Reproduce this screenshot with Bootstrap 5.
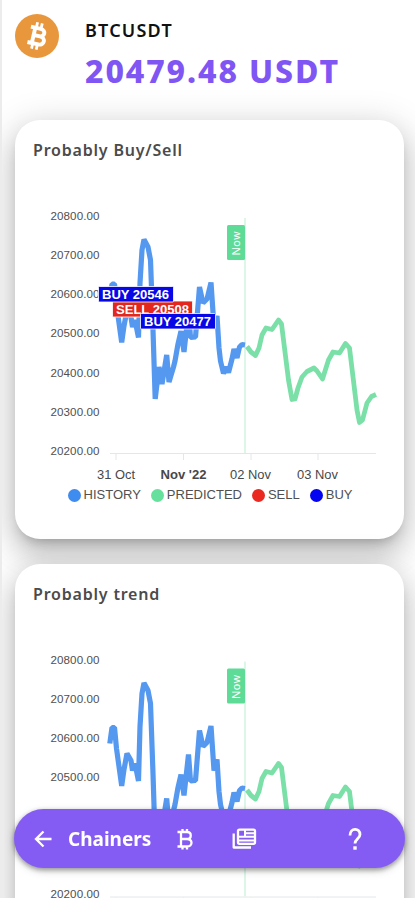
<!DOCTYPE html>
<html lang="en">
<head>
<meta charset="utf-8">
<meta name="viewport" content="width=device-width, initial-scale=1">
<title>Chainers</title>
<link href="https://cdn.jsdelivr.net/npm/bootstrap@5.3.0/dist/css/bootstrap.min.css" rel="stylesheet">
<style>
  body { height: 900px; font-family: "Noto Sans", sans-serif; background: #fff; }
  .screen { height: 898px; border-left: 2px solid #ececec; padding: 14px 11px 0 13px; }
  .coin-head { height: 106px; gap: 26px; }
  .pair { font-size: 18px; line-height: 20px; font-weight: 600; color: #111; letter-spacing: 1.2px; margin-top: 6px; }
  .price { font-size: 32px; line-height: 40px; font-weight: 800; color: #7f56f3; letter-spacing: 1.9px; margin-top: 11px; }
  .chart-card { height: 419px; margin-bottom: 25px; border-radius: 25px;
    box-shadow: 0 8px 12px -6px rgba(0,0,0,.25), 0 16px 28px 2px rgba(0,0,0,.14), 0 6px 34px 6px rgba(0,0,0,.12); }
  .chart-title { font-size: 16px; line-height: 24px; font-weight: 600; color: #4b4b4b; letter-spacing: .8px; padding: 18px 0 0 18px; }
  .plot { font-family: "Liberation Sans", sans-serif; }
  .plot .tick { font-size: 11.6px; fill: #505050; }
  .plot .dates { font-size: 12.6px; fill: #484848; }
  .plot .flag { font-size: 12px; font-weight: 700; fill: #fff; }
  .legend-row { font: 13px/16px "Liberation Sans", sans-serif; color: #505050; gap: 10px; padding: 1px 0 0 1px; }
  .legend-row i { width: 13px; height: 13px; border-radius: 50%; margin-right: 3px; }
  .dock { left: 14px; bottom: 32px; width: 391px; height: 59px; border-radius: 30px; background: #855cf3; padding: 0 42px 0 19px;
    box-shadow: 0 2px 5px rgba(0,0,0,.35), 0 3px 10px rgba(0,0,0,.15); }
  .brand-name { font-size: 19px; font-weight: 700; letter-spacing: 0; margin-left: 13px; width: 83px; padding-top: 1px; }
</style>
<script src="https://cdn.jsdelivr.net/npm/bootstrap@5.3.0/dist/js/bootstrap.bundle.min.js"></script>
</head>
<body class="overflow-hidden">
<main class="screen overflow-hidden">
  <header class="coin-head d-flex align-items-start">
    <svg width="44" height="44" viewBox="0 0 44 44" class="flex-shrink-0">
      <circle cx="22" cy="22" r="22" fill="#e9973c"/>
      <g transform="rotate(13 22 22)" fill="none" stroke="#fff">
        <path d="M14 14.200h10c6 0 6 7.500 0 7.500h-4.500M19 21.700h6c6.500 0 6.500 8.300 0 8.300H14M18.500 14.500v15" stroke-width="3.900"/>
        <path d="M19.500 8.500v5M24.300 8.500v5M19.500 30.500v5M24.300 30.500v5" stroke-width="2.800"/>
      </g>
    </svg>
    <div>
      <div class="pair">BTCUSDT</div>
      <div class="price text-nowrap">20479.48 USDT</div>
    </div>
  </header>

  <section class="card chart-card border-0">
    <div class="chart-title">Probably Buy/Sell</div>
    <svg class="plot" width="389" height="324" viewBox="15 162 389 324">
      <g id="base">
        <g class="tick">
          <text x="50.500" y="220" textLength="49">20800.00</text>
          <text x="50.500" y="259.200" textLength="49">20700.00</text>
          <text x="50.500" y="298.300" textLength="49">20600.00</text>
          <text x="50.500" y="337.400" textLength="49">20500.00</text>
          <text x="50.500" y="376.500" textLength="49">20400.00</text>
          <text x="50.500" y="415.600" textLength="49">20300.00</text>
          <text x="50.500" y="454.700" textLength="49">20200.00</text>
        </g>
        <g class="dates">
          <text x="97" y="479" textLength="38" lengthAdjust="spacingAndGlyphs">31 Oct</text>
          <text x="160.500" y="479" textLength="46" lengthAdjust="spacingAndGlyphs" font-weight="700">Nov '22</text>
          <text x="230" y="479" textLength="41" lengthAdjust="spacingAndGlyphs">02 Nov</text>
          <text x="297" y="479" textLength="41" lengthAdjust="spacingAndGlyphs">03 Nov</text>
        </g>
        <path d="M110 453.500H376M116 454v6M183.500 454v6M251 454v6M318 454v6" stroke="#e4e6e8" fill="none"/>
        <path d="M245 218V453" stroke="#dcf7e8" stroke-width="2"/>
        <g fill="none" stroke-width="4.800" stroke-linejoin="bevel">
          <path stroke="#5598f0" stroke-width="5.200" d="M109.800 300L112 284L114.500 284L116.500 305L121.700 342.500L124 326L127 310L131 317L132.500 327L135 320L138.500 337.500L140 283L142 250L144 239.500L148 247L150.500 260L153 330L155.200 399L159 367L162 384L166.700 355L169 382L173.500 367L175 361L178 344L181 331L184 352L188.500 311L190.500 337.500L195.500 337L199.500 287L203 303L207 299L211 282.500L214 327L217 316L219 348L220.500 361L223.500 373.500L226 367L228.500 372.500L232 359L234 349L237 358L239.500 347L242 344.500L245 345"/>
          <path stroke="#7ae0a8" stroke-linejoin="round" d="M247 346.500L251 352L255.500 355.500L259 348L262 335L266 328L272 329.500L278.500 320L281.500 324L284.500 348L288.500 380L292 399.500L295 399L298 388L302 377L307 371.500L314 368L317 371L322.500 379L328.500 360L333 352L339.500 353L345.500 343.500L349.500 348L353.500 381L357 410L359.500 422.500L362.500 420L367 403L371.500 396.500L376 394.500"/>
        </g>
        <rect x="227" y="225" width="18" height="35" rx="1.500" fill="#5ddb97"/>
        <text transform="translate(240 255.500) rotate(-90)" font-size="11.500" fill="#fff" textLength="24">Now</text>
      </g>
      <g class="flag" stroke="#fff" stroke-width=".8">
        <rect x="112.500" y="301" width="80" height="16" rx="1" fill="#e3261e"/>
        <text x="116" y="313.500" textLength="73" lengthAdjust="spacingAndGlyphs" stroke="none">SELL 20508</text>
        <rect x="98.500" y="286.500" width="75" height="15.500" rx="1" fill="#0808e6"/>
        <text x="102" y="298.500" textLength="67" lengthAdjust="spacingAndGlyphs" stroke="none">BUY 20546</text>
        <rect x="140.500" y="313.500" width="75" height="15.500" rx="1" fill="#0808e6"/>
        <text x="144" y="325.500" textLength="67" lengthAdjust="spacingAndGlyphs" stroke="none">BUY 20477</text>
      </g>
    </svg>
    <div class="legend-row d-flex justify-content-center">
      <span class="d-flex align-items-center"><i style="background:#3e8cf0"></i>HISTORY</span>
      <span class="d-flex align-items-center"><i style="background:#66e09c"></i>PREDICTED</span>
      <span class="d-flex align-items-center"><i style="background:#ea2a20"></i>SELL</span>
      <span class="d-flex align-items-center"><i style="background:#0404f2"></i>BUY</span>
    </div>
  </section>

  <section class="card chart-card border-0">
    <div class="chart-title">Probably trend</div>
    <svg class="plot" width="389" height="324" viewBox="15 162.500 389 324"><use href="#base"/></svg>
  </section>
</main>

<nav class="dock position-fixed d-flex align-items-center text-white">
  <svg width="22" height="22" viewBox="0 0 22 22" fill="none" stroke="#fff" stroke-width="2.300"><path d="M18.500 11H3.500M10.500 3.500L3 11l7.500 7.500"/></svg>
  <span class="brand-name text-nowrap">Chainers</span>
  <svg style="margin-left:24px" width="20" height="24" viewBox="0 0 20 24" fill="none" stroke="#fff" stroke-width="2.300"><path d="M2.500 5h9.500c5 0 5 7 0 7H6M12 12c6 0 6 7.500 0 7.500H2.500M6 5V19.500M7.500 2v3.500M12 2v3.500M7.500 19v3.500M12 19v3.500"/></svg>
  <svg style="margin-left:36px" width="26" height="24" viewBox="0 0 26 24" fill="none" stroke="#fff" stroke-width="2.300" stroke-linejoin="round"><path d="M2.700 6.500V20.500H20"/><rect x="7" y="2.600" width="17" height="14.200" rx="1.500"/><path d="M7 9.800h17M14 3v7M14 6.300h9M7 13.400h16" stroke-width="2"/></svg>
  <svg class="ms-auto" width="16" height="24" viewBox="0 0 16 24"><path d="M3 8.500C3 0.500 13 0.500 13 7.500c0 4-5 4.500-5 9" fill="none" stroke="#fff" stroke-width="2.800"/><rect x="6.300" y="19.300" width="3.400" height="3.400" fill="#fff"/></svg>
</nav>
</body>
</html>
